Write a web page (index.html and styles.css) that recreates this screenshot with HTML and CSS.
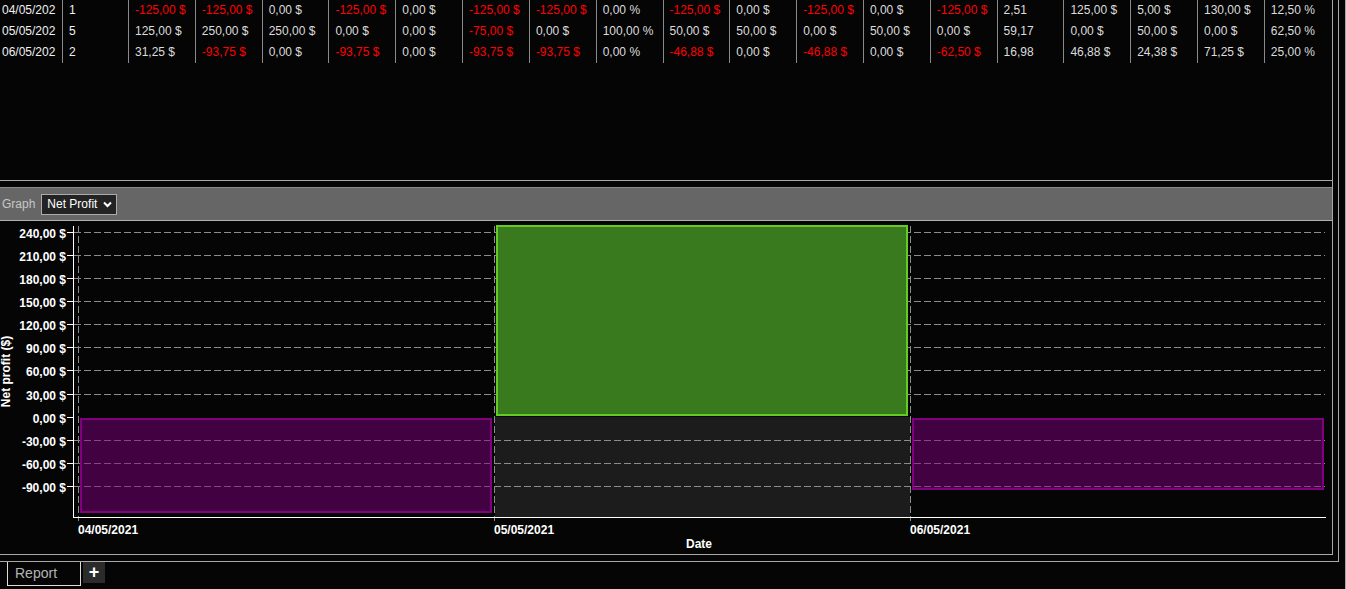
FILE: index.html
```html
<!DOCTYPE html>
<html lang="fr">
<head>
  <meta charset="UTF-8">
  <meta name="viewport" content="width=device-width, initial-scale=1.0">
  <title>Report</title>
  <link rel="stylesheet" href="styles.css">
</head>
<body>
  <div class="app">
    <div class="workspace">
      <div class="panels">
        <div class="grid-panel">
          <div class="row">
            <div class="cell date">04/05/202</div>
            <div class="cell count">1</div>
            <div class="cell neg">-125,00 $</div>
            <div class="cell neg">-125,00 $</div>
            <div class="cell">0,00 $</div>
            <div class="cell neg">-125,00 $</div>
            <div class="cell">0,00 $</div>
            <div class="cell neg">-125,00 $</div>
            <div class="cell neg">-125,00 $</div>
            <div class="cell">0,00 %</div>
            <div class="cell neg">-125,00 $</div>
            <div class="cell">0,00 $</div>
            <div class="cell neg">-125,00 $</div>
            <div class="cell">0,00 $</div>
            <div class="cell neg">-125,00 $</div>
            <div class="cell">2,51</div>
            <div class="cell">125,00 $</div>
            <div class="cell">5,00 $</div>
            <div class="cell">130,00 $</div>
            <div class="cell last">12,50 %</div>
          </div>
          <div class="row">
            <div class="cell date">05/05/202</div>
            <div class="cell count">5</div>
            <div class="cell">125,00 $</div>
            <div class="cell">250,00 $</div>
            <div class="cell">250,00 $</div>
            <div class="cell">0,00 $</div>
            <div class="cell">0,00 $</div>
            <div class="cell neg">-75,00 $</div>
            <div class="cell">0,00 $</div>
            <div class="cell">100,00 %</div>
            <div class="cell">50,00 $</div>
            <div class="cell">50,00 $</div>
            <div class="cell">0,00 $</div>
            <div class="cell">50,00 $</div>
            <div class="cell">0,00 $</div>
            <div class="cell">59,17</div>
            <div class="cell">0,00 $</div>
            <div class="cell">50,00 $</div>
            <div class="cell">0,00 $</div>
            <div class="cell last">62,50 %</div>
          </div>
          <div class="row">
            <div class="cell date">06/05/202</div>
            <div class="cell count">2</div>
            <div class="cell">31,25 $</div>
            <div class="cell neg">-93,75 $</div>
            <div class="cell">0,00 $</div>
            <div class="cell neg">-93,75 $</div>
            <div class="cell">0,00 $</div>
            <div class="cell neg">-93,75 $</div>
            <div class="cell neg">-93,75 $</div>
            <div class="cell">0,00 %</div>
            <div class="cell neg">-46,88 $</div>
            <div class="cell">0,00 $</div>
            <div class="cell neg">-46,88 $</div>
            <div class="cell">0,00 $</div>
            <div class="cell neg">-62,50 $</div>
            <div class="cell">16,98</div>
            <div class="cell">46,88 $</div>
            <div class="cell">24,38 $</div>
            <div class="cell">71,25 $</div>
            <div class="cell last">25,00 %</div>
          </div>
        </div>

        <div class="toolbar">
          <span class="toolbar-label">Graph</span>
          <div class="select">
            <span>Net Profit</span>
            <svg class="chevron" width="9" height="7" viewBox="0 0 9 7">
              <polyline points="1,1.5 4.5,5 8,1.5" fill="none" stroke="#fff" stroke-width="2"/>
            </svg>
          </div>
        </div>

        <div class="chart">
          <svg width="1332" height="333" viewBox="0 221 1332 333">
            <!-- band below zero for the middle day -->
            <rect x="495" y="417" width="415" height="100" fill="#1c1c1c"/>

            <g stroke="#8c8c8c" stroke-width="1" stroke-dasharray="7 3">
              <line x1="74" y1="232.5" x2="1325" y2="232.5"/>
              <line x1="74" y1="255.5" x2="1325" y2="255.5"/>
              <line x1="74" y1="278.5" x2="1325" y2="278.5"/>
              <line x1="74" y1="301.5" x2="1325" y2="301.5"/>
              <line x1="74" y1="324.5" x2="1325" y2="324.5"/>
              <line x1="74" y1="347.5" x2="1325" y2="347.5"/>
              <line x1="74" y1="370.5" x2="1325" y2="370.5"/>
              <line x1="74" y1="394.5" x2="1325" y2="394.5"/>
              <line x1="74" y1="440.5" x2="1325" y2="440.5"/>
              <line x1="74" y1="463.5" x2="1325" y2="463.5"/>
              <line x1="74" y1="486.5" x2="1325" y2="486.5"/>
              <line x1="78.5" y1="226" x2="78.5" y2="521"/>
              <line x1="494.5" y1="226" x2="494.5" y2="521"/>
              <line x1="910.5" y1="226" x2="910.5" y2="521"/>
            </g>

            <rect x="81" y="419" width="410" height="93" fill="rgba(128,0,128,0.5)" stroke="#800080" stroke-width="2"/>
            <rect x="497" y="226" width="410" height="189" fill="#3a7a1e" stroke="#62cc22" stroke-width="2"/>
            <rect x="913" y="419" width="410" height="70" fill="rgba(128,0,128,0.5)" stroke="#800080" stroke-width="2"/>

            <g stroke="#fff" stroke-width="1">
              <line x1="73.5" y1="226" x2="73.5" y2="518"/>
              <line x1="73" y1="517.5" x2="1326" y2="517.5"/>
              <line x1="67" y1="232.5" x2="73" y2="232.5"/>
              <line x1="67" y1="255.5" x2="73" y2="255.5"/>
              <line x1="67" y1="278.5" x2="73" y2="278.5"/>
              <line x1="67" y1="301.5" x2="73" y2="301.5"/>
              <line x1="67" y1="324.5" x2="73" y2="324.5"/>
              <line x1="67" y1="347.5" x2="73" y2="347.5"/>
              <line x1="67" y1="370.5" x2="73" y2="370.5"/>
              <line x1="67" y1="394.5" x2="73" y2="394.5"/>
              <line x1="67" y1="417.5" x2="73" y2="417.5"/>
              <line x1="67" y1="440.5" x2="73" y2="440.5"/>
              <line x1="67" y1="463.5" x2="73" y2="463.5"/>
              <line x1="67" y1="486.5" x2="73" y2="486.5"/>
            </g>

            <g class="axis-text" text-anchor="end">
              <text x="66" y="237.5">240,00 $</text>
              <text x="66" y="260.5">210,00 $</text>
              <text x="66" y="283.5">180,00 $</text>
              <text x="66" y="306.5">150,00 $</text>
              <text x="66" y="329.5">120,00 $</text>
              <text x="66" y="352.5">90,00 $</text>
              <text x="66" y="375.5">60,00 $</text>
              <text x="66" y="399.5">30,00 $</text>
              <text x="66" y="422.5">0,00 $</text>
              <text x="66" y="445.5">-30,00 $</text>
              <text x="66" y="468.5">-60,00 $</text>
              <text x="66" y="491.5">-90,00 $</text>
            </g>

            <g class="axis-text">
              <text x="78" y="534">04/05/2021</text>
              <text x="494" y="534">05/05/2021</text>
              <text x="910" y="534">06/05/2021</text>
              <text x="699" y="548" text-anchor="middle">Date</text>
              <text x="10" y="371.5" text-anchor="middle" transform="rotate(-90 10 371.5)">Net profit ($)</text>
            </g>
          </svg>
        </div>
      </div>
    </div>

    <div class="tabs">
      <div class="tab">Report</div>
      <div class="tab-add">+</div>
    </div>
  </div>
</body>
</html>
```

FILE: styles.css
```css
body {
  margin: 0;
  background: #050505;
  font-family: "Liberation Sans", Arial, sans-serif;
  font-size: 12px;
  color: #dcdcdc;
  overflow: hidden;
}
.app {
  width: 1346px;
  height: 589px;
  box-sizing: border-box;
  border-right: 1px solid #a8a8a8;
  display: flex;
  flex-direction: column;
}
.workspace {
  width: 1339px;
  box-sizing: border-box;
  border-right: 1px solid #a8a8a8;
  border-bottom: 1px solid #a8a8a8;
  padding-bottom: 6px;
}
.panels {
  width: 1333px;
  box-sizing: border-box;
  border-right: 1px solid #a8a8a8;
  border-bottom: 1px solid #a8a8a8;
  display: flex;
  flex-direction: column;
}

/* data grid */
.grid-panel {
  height: 181px;
  box-sizing: border-box;
  border-bottom: 1px solid #a8a8a8;
}
.row {
  display: flex;
  height: 21px;
  line-height: 21px;
}
.cell {
  width: 66.82px;
  flex-shrink: 0;
  box-sizing: border-box;
  border-left: 1px solid #8a8a8a;
  padding-left: 6px;
  white-space: nowrap;
}
.cell.date {
  width: 62px;
  border-left: none;
  padding-left: 2px;
  color: #f0f0f0;
}
.cell.count {
  width: 66px;
  color: #f0f0f0;
}
.cell.last {
  width: 68px;
}
.cell.neg {
  color: #f00;
}

/* graph toolbar */
.toolbar {
  margin-top: 6px;
  height: 34px;
  box-sizing: border-box;
  background: #666;
  border-top: 1px solid #8a8a8a;
  border-bottom: 1px solid #b0b0b0;
  display: flex;
  align-items: center;
  gap: 6px;
  padding-left: 2px;
}
.toolbar-label {
  color: #c8c8c8;
}
.select {
  height: 21px;
  width: 76px;
  box-sizing: border-box;
  background: #232323;
  border: 1px solid #acacac;
  color: #fff;
  display: flex;
  align-items: center;
  padding-left: 5px;
  gap: 6px;
}
.chevron {
  display: block;
}

.chart {
  height: 333px;
}
.chart svg {
  display: block;
}
.axis-text {
  fill: #fff;
  font-family: "Liberation Sans", Arial, sans-serif;
  font-size: 12px;
  font-weight: bold;
}

/* bottom tabs */
.tabs {
  display: flex;
  align-items: flex-start;
  padding-left: 7px;
}
.tab {
  width: 74px;
  height: 24px;
  box-sizing: border-box;
  border: 1px solid #dcdcdc;
  border-top: none;
  padding-left: 7px;
  line-height: 22px;
  font-size: 14px;
  color: #b4b4b4;
}
.tab-add {
  margin-left: 2px;
  width: 22px;
  height: 21px;
  background: #2b2b2b;
  color: #fff;
  font-size: 18px;
  font-weight: bold;
  line-height: 20px;
  text-align: center;
}
```
